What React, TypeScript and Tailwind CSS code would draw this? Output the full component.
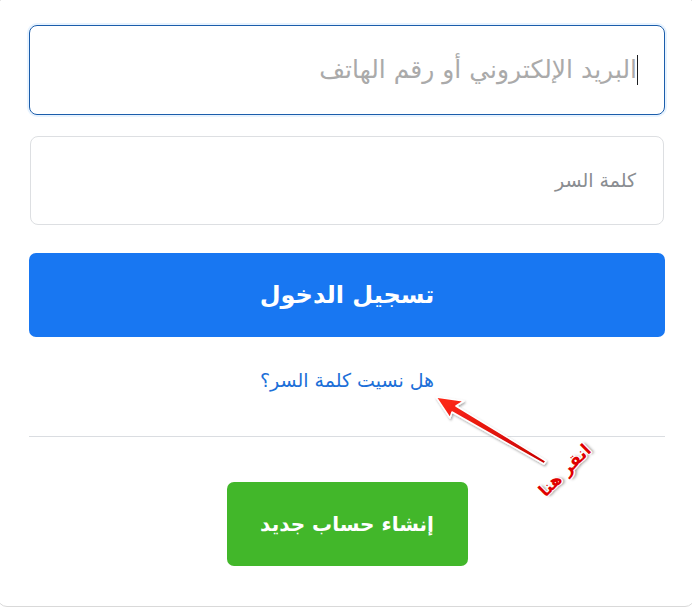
import React from "react";

const font = { fontFamily: '"DejaVu Sans", "Liberation Sans", sans-serif' };

function ClickHereArrow() {
  return (
    <div className="pointer-events-none absolute inset-0">
      <svg className="absolute left-0 top-0" width="692" height="609" viewBox="0 0 692 609">
        <defs>
          <linearGradient id="arrowRed" x1="0" y1="0" x2="1" y2="1">
            <stop offset="0" stopColor="#ff2a1a" />
            <stop offset="1" stopColor="#c80000" />
          </linearGradient>
          <filter id="arrowShadow" x="-20%" y="-20%" width="140%" height="140%">
            <feDropShadow dx="1" dy="1.5" stdDeviation="1.2" floodColor="#000" floodOpacity="0.35" />
          </filter>
        </defs>
        <path
          d="M436 397 L464 401 L456 406 L546 461 L544 464 L452 412 L450 418 Z"
          fill="url(#arrowRed)"
          stroke="#fff"
          strokeWidth="1.5"
          strokeLinejoin="round"
          filter="url(#arrowShadow)"
        />
      </svg>
      <div
        className="absolute left-[532px] top-[458px] -rotate-[45deg] text-[17px] font-bold text-[#e00000]"
        style={{
          ...font,
          textShadow:
            "1px 0 0 #fff, -1px 0 0 #fff, 0 1px 0 #fff, 0 -1px 0 #fff, 1px 1px 0 #fff, -1px -1px 0 #fff, 2px 2px 3px rgba(0,0,0,0.45)",
        }}
        dir="rtl"
      >
        انقر هنا
      </div>
    </div>
  );
}

export default function App() {
  return (
    <div className="relative h-[609px] w-[692px] overflow-hidden bg-white" style={font}>
      <div
        dir="rtl"
        className="-ml-[3px] -mt-[3px] flex h-[610px] w-[698px] flex-col rounded-[10px] border border-[#d9d9d9] bg-white pl-[31px] pr-[29px] pt-[27px]"
      >
        <div className="flex h-[90px] items-center rounded-[8px] border border-[#1b5dab] px-[26px] shadow-[0_0_0_2px_#e7f3ff]">
          <span className="h-[30px] w-px bg-[#1c1e21]" />
          <span className="text-[25px] text-[#aaaaaa]">البريد الإلكتروني أو رقم الهاتف</span>
        </div>
        <div className="mx-[1px] mt-[21px] flex h-[89px] items-center rounded-[8px] border border-[#dddfe2] px-[27px]">
          <span className="text-[19px] text-[#8a8d91]">كلمة السر</span>
        </div>
        <button className="mt-[28px] flex h-[84px] w-full items-center justify-center rounded-[7px] bg-[#1877f2] text-[24px] font-bold text-white">
          تسجيل الدخول
        </button>
        <div className="flex h-[99px] items-center justify-center pb-[12px]">
          <a className="text-[19px] text-[#1c6fd8]">هل نسيت كلمة السر؟</a>
        </div>
        <div className="h-px bg-[#dadde1]" />
        <div className="flex justify-center pt-[45px]">
          <button className="flex h-[84px] w-[241px] items-center justify-center rounded-[7px] bg-[#42b72a] text-[20px] font-bold text-white">
            إنشاء حساب جديد
          </button>
        </div>
      </div>
      <ClickHereArrow />
    </div>
  );
}
